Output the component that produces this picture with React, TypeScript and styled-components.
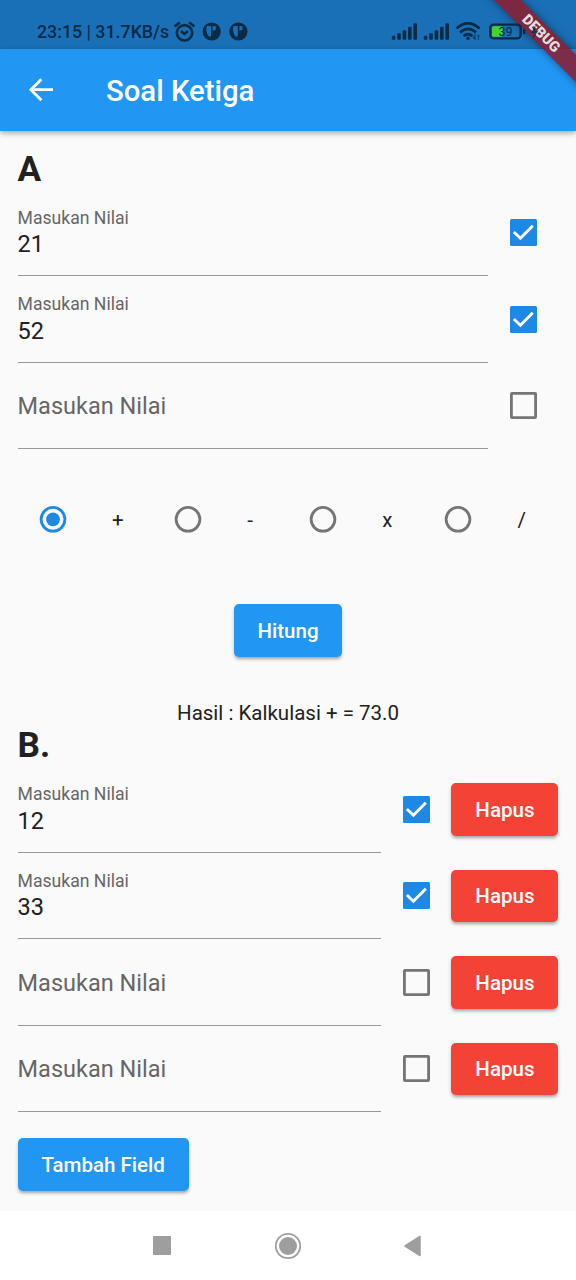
import React from "react";
import styled, { createGlobalStyle } from "styled-components";

const Global = createGlobalStyle`
  * { box-sizing: border-box; }
  body { margin: 0; background: #fafafa; }
`;

const Screen = styled.div`
  position: relative;
  width: 576px;
  height: 1280px;
  overflow: hidden;
  display: flex;
  flex-direction: column;
  background: #fafafa;
  color: #212121;
  font-family: Roboto, sans-serif;
`;

const StatusBar = styled.header`
  height: 48.5px;
  flex: none;
  display: flex;
  align-items: center;
  padding: 15px 37px 0;
  background: #1a70b7;
  color: #0a2a45;
`;

const StatusText = styled.span`
  font-size: 17.8px;
  font-weight: 500;
  line-height: 20px;
  width: 136px;
  white-space: nowrap;
`;

const StatusIcons = styled.svg`
  flex: none;
  display: block;
  z-index: 3;
`;

const Spacer = styled.div`
  flex: 1;
`;

const AppBar = styled.div`
  height: 82px;
  flex: none;
  display: flex;
  align-items: center;
  gap: 50px;
  padding-left: 26px;
  background: #2196f3;
  color: #fff;
  box-shadow: 0 2px 6px rgba(0, 0, 0, 0.35);
  z-index: 1;
`;

const Title = styled.h1`
  margin: 3px 0 0;
  font-size: 29.3px;
  font-weight: 500;
  line-height: 36px;
`;

const Content = styled.main`
  flex: 1;
  padding: 18px 17.6px 0;
`;

const Heading = styled.h2`
  margin: 0;
  font-size: 35.2px;
  font-weight: 700;
  line-height: 41px;
`;

const FieldRow = styled.div`
  height: 86.5px;
  display: flex;
`;

const Field = styled.div<{ $empty?: boolean }>`
  flex: 1;
  height: 86.5px;
  display: flex;
  flex-direction: column;
  border-bottom: 1.5px solid #979797;
  padding-top: ${(p) => (p.$empty ? 29.5 : 17)}px;
`;

const Label = styled.label`
  font-size: 17.6px;
  line-height: 22px;
  color: #666;
`;

const Value = styled.span`
  font-size: 23.5px;
  line-height: 28px;
  margin-top: 1.6px;
`;

const Placeholder = styled.span`
  font-size: 23.5px;
  line-height: 28px;
  color: #666;
`;

const CheckCell = styled.div`
  width: 70.4px;
  height: 86.5px;
  display: flex;
  align-items: center;
  justify-content: center;
`;

const ActionCell = styled.div`
  height: 86.5px;
  display: flex;
  align-items: center;
`;

const Button = styled.button<{ $tone?: "red"; $width: number }>`
  width: ${(p) => p.$width}px;
  height: 52.8px;
  padding: 1px 0 0;
  border: 0;
  border-radius: 5px;
  background: ${(p) => (p.$tone === "red" ? "#f44336" : "#2196f3")};
  color: #fff;
  font: 500 20.5px/24px Roboto, sans-serif;
  box-shadow: 0 3px 3px -1px rgba(0, 0, 0, 0.22), 0 2px 4px rgba(0, 0, 0, 0.16);
`;

const Operators = styled.div`
  display: flex;
  height: 70px;
  margin-top: 35px;
  align-items: center;
`;

const Operator = styled.label`
  width: 135.2px;
  display: flex;
  align-items: center;
`;

const RadioCell = styled.span`
  width: 70.4px;
  display: flex;
  justify-content: center;
`;

const OperatorSign = styled.span`
  padding: 1px 0 0 24px;
  font-size: 20.5px;
  line-height: 24px;
`;

const ActionLine = styled.div<{ $top: number; $align?: "start" }>`
  display: flex;
  justify-content: ${(p) => (p.$align === "start" ? "flex-start" : "center")};
  margin-top: ${(p) => p.$top}px;
`;

const Result = styled.p`
  margin: 0;
  font-size: 20.5px;
  line-height: 24px;
`;

const NavBar = styled.nav`
  height: 69px;
  flex: none;
  display: flex;
  justify-content: center;
  align-items: center;
  background: #fff;
`;

const NavItem = styled.div`
  width: 126px;
  display: flex;
  justify-content: center;
`;

const DebugBanner = styled.div`
  position: absolute;
  z-index: 2;
  top: 0;
  right: 0;
  width: 100px;
  height: 100px;
  overflow: hidden;
`;

const DebugRibbon = styled.div`
  position: absolute;
  left: -10px;
  top: 24px;
  width: 150px;
  height: 19px;
  transform: rotate(45deg);
  background: rgba(140, 28, 44, 0.86);
  box-shadow: 0 0 8px rgba(0, 0, 0, 0.45);
  color: #e2dcdf;
  font: 900 14.6px/19px Roboto, sans-serif;
  text-align: center;
`;

function Checkbox({ checked }: { checked?: boolean }) {
  return (
    <svg width="27" height="27" viewBox="0 0 27 27">
      {checked ? (
        <>
          <rect width="27" height="27" rx="1.5" fill="#1e88e5" />
          <path d="M3.8 13L10.4 19.2L22.8 6.8" fill="none" stroke="#fff" strokeWidth="2.9" />
        </>
      ) : (
        <rect x="1.4" y="1.4" width="24.2" height="24.2" rx="0.6" fill="none" stroke="#757575" strokeWidth="2.8" />
      )}
    </svg>
  );
}

function Radio({ selected }: { selected?: boolean }) {
  const color = selected ? "#1e88e5" : "#757575";
  return (
    <svg width="28" height="28" viewBox="0 0 28 28">
      <circle cx="14" cy="14.3" r="11.9" fill="none" stroke={color} strokeWidth="2.8" />
      {selected && <circle cx="14" cy="14.3" r="6.9" fill={color} />}
    </svg>
  );
}

function InputField({ value }: { value?: string }) {
  return (
    <Field $empty={!value}>
      {value ? (
        <>
          <Label>Masukan Nilai</Label>
          <Value>{value}</Value>
        </>
      ) : (
        <Placeholder>Masukan Nilai</Placeholder>
      )}
    </Field>
  );
}

function Signal({ x }: { x: number }) {
  return (
    <g fill="currentColor">
      {[4, 6.5, 9.5, 13, 16.5].map((h, i) => (
        <rect key={i} x={x + i * 5.4} y={18.8 - h} width="3.6" height={h} rx="1.2" />
      ))}
    </g>
  );
}

const fieldsA = ["21", "52", ""];
const fieldsB = ["12", "33", "", ""];
const operators = ["+", "-", "x", "/"];

export default function App() {
  return (
    <Screen>
      <Global />
      <StatusBar>
        <StatusText>23:15 | 31.7KB/s</StatusText>
        <StatusIcons width="76" height="22" viewBox="0 0 76 22">
          <g fill="none" stroke="currentColor" strokeWidth="2.6">
            <circle cx="11.5" cy="11.8" r="7.7" />
            <path d="M8 10L11.5 13L15 10" />
            <path d="M1.6 5.6L6.8 1.4M21.4 5.6L16.2 1.4" />
          </g>
          {[38.7, 65.4].map((x) => (
            <g key={x}>
              <circle cx={x} cy="10.5" r="9.1" fill="currentColor" />
              <path
                d={`M${x - 4.8} 5H${x - 0.6}V15.5H${x - 3}Q${x - 6.6} 10.5 ${x - 4.8} 5ZM${x + 1} 5H${x + 3.6}Q${x + 5.2} 8.6 ${x + 2.6} 9.6H${x + 1}Z`}
                fill="#1a70b7"
              />
            </g>
          ))}
        </StatusIcons>
        <Spacer />
        <StatusIcons width="148" height="22" viewBox="0 0 148 22">
          <Signal x={0.8} />
          <Signal x={32.8} />
          <g fill="none" stroke="currentColor" strokeWidth="2.7">
            <path d="M65.5 7.4Q77 -2.8 88.5 7.4M69 11.4Q77 4.2 85 11.4M72.7 15Q77 11.2 81.3 15" />
          </g>
          <circle cx="77" cy="17.2" r="1.8" fill="currentColor" />
          <path d="M84 13.6L81.8 17H85M84 13.6V19M87.4 14V19M86.2 15.2L87.4 14L88.6 15.2" fill="none" stroke="currentColor" strokeWidth="0.9" opacity="0.8" />
          <rect x="99.3" y="3.6" width="30.4" height="13.8" rx="3.5" fill="none" stroke="currentColor" strokeWidth="2.4" />
          <rect x="101" y="5.2" width="10.5" height="10.6" rx="1.5" fill="#45d332" />
          <rect x="132" y="7.8" width="2.4" height="5.4" rx="1" fill="currentColor" />
          <text x="114.5" y="15" textAnchor="middle" fontSize="12.6" fill="currentColor">39</text>
          <path d="M144.5 4L140 12H143.4L141.8 18L147.4 9.6H144Z" fill="currentColor" opacity="0.9" />
        </StatusIcons>
      </StatusBar>
      <AppBar>
        <svg width="30" height="30" viewBox="0 0 30 30">
          <path d="M27 14.7H5M15.4 4.2L4.9 14.7L15.4 25.2" fill="none" stroke="#fff" strokeWidth="2.8" />
        </svg>
        <Title>Soal Ketiga</Title>
      </AppBar>
      <Content>
        <Heading>A</Heading>
        {fieldsA.map((v, i) => (
          <FieldRow key={i}>
            <InputField value={v} />
            <CheckCell><Checkbox checked={!!v} /></CheckCell>
          </FieldRow>
        ))}
        <Operators>
          {operators.map((op, i) => (
            <Operator key={op}>
              <RadioCell><Radio selected={i === 0} /></RadioCell>
              <OperatorSign>{op}</OperatorSign>
            </Operator>
          ))}
        </Operators>
        <ActionLine $top={50}><Button $width={108}>Hitung</Button></ActionLine>
        <ActionLine $top={44.4}><Result>Hasil : Kalkulasi + = 73.0</Result></ActionLine>
        <Heading>B.</Heading>
        {fieldsB.map((v, i) => (
          <FieldRow key={i}>
            <InputField value={v} />
            <CheckCell><Checkbox checked={!!v} /></CheckCell>
            <ActionCell><Button $tone="red" $width={107}>Hapus</Button></ActionCell>
          </FieldRow>
        ))}
        <ActionLine $top={26} $align="start"><Button $width={171}>Tambah Field</Button></ActionLine>
      </Content>
      <NavBar>
        <NavItem>
          <svg width="19" height="19" viewBox="0 0 19 19"><rect width="18" height="19" rx="1" fill="#9e9e9e" /></svg>
        </NavItem>
        <NavItem>
          <svg width="28" height="28" viewBox="0 0 28 28">
            <circle cx="14" cy="14" r="12.2" fill="none" stroke="#9e9e9e" strokeWidth="1.8" />
            <circle cx="14" cy="14" r="9" fill="#9e9e9e" />
          </svg>
        </NavItem>
        <NavItem>
          <svg width="20" height="22" viewBox="0 0 20 22"><path d="M1 11L16 1.5V20.5Z" fill="#9e9e9e" stroke="#9e9e9e" strokeWidth="1.5" strokeLinejoin="round" /></svg>
        </NavItem>
      </NavBar>
      <DebugBanner><DebugRibbon>DEBUG</DebugRibbon></DebugBanner>
    </Screen>
  );
}
